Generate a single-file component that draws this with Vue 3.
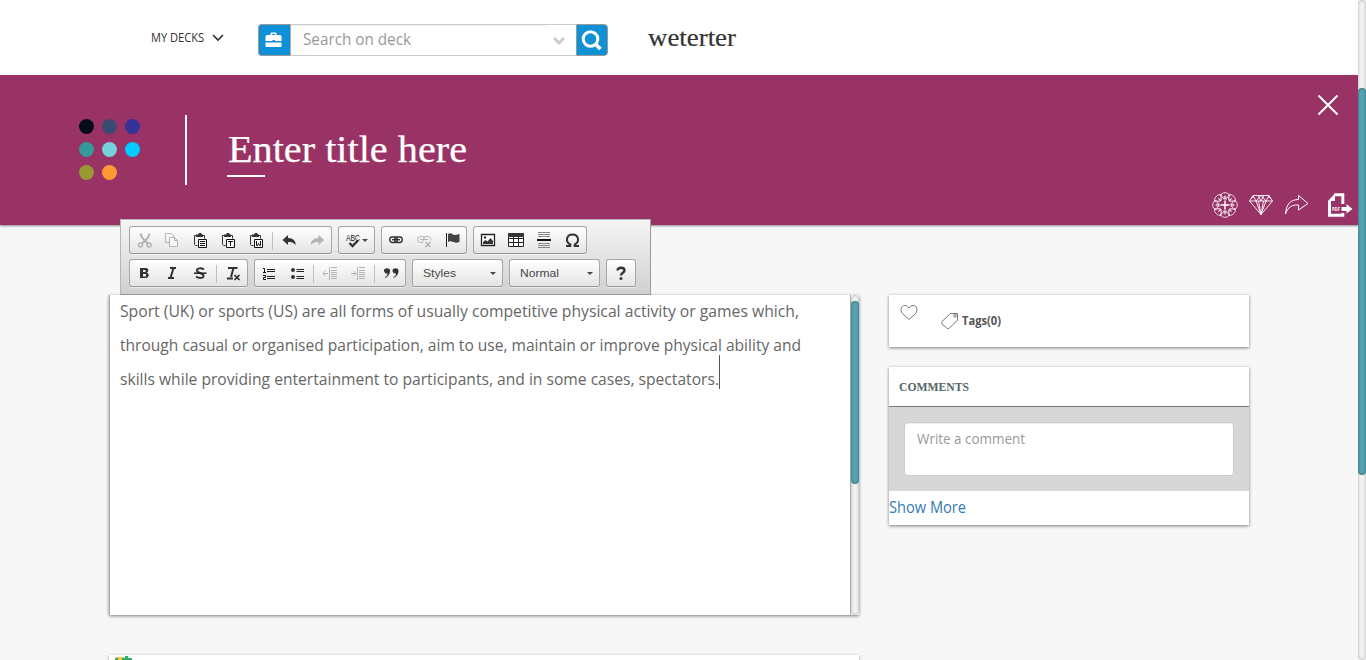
<script setup>
import { h } from 'vue'

// Text run set to a fixed measure, so every line keeps its width.
const Fit = (p) =>
  h('svg', { width: p.w, height: p.size * 1.5, style: { display: 'block', overflow: 'visible' }, 'aria-label': p.text }, [
    h('text', { x: 0, y: p.size * 1.1, 'font-size': p.size, fill: 'currentColor', textLength: p.w, lengthAdjust: 'spacingAndGlyphs' }, p.text),
  ])
Fit.props = ['text', 'w', 'size']

const clip = `<path d="M4.5 3.5h-2v9l1 1h2M11 3.5h1.500v3" fill="none" stroke="#333"/><path d="M4 2.500h2L7 1h2l1 1.500h1V5H4z" fill="#333"/><path d="M6.500 7.500h8v8h-8z" fill="#fff" stroke="#111"/>`
const lines = (x1, x2, ys) => `<path d="${ys.map((y) => `M${x1} ${y}.5H${x2}`).join('')}" fill="none" stroke="currentColor"/>`
const icons = {
  cut: `<path d="M4.500 1.500l1 3 3.500 4.500 3.500-4.500 1-3M9 8.500L5.500 12M9 8.500l3.500 3.500" stroke="currentColor" stroke-width="2" fill="none"/><circle cx="4.500" cy="13" r="2" fill="none" stroke="currentColor" stroke-width="1.500"/><circle cx="13" cy="13" r="2" fill="none" stroke="currentColor" stroke-width="1.500"/>`,
  copy: `<path d="M5 10.500H1.500v-9h6l2 2V5" fill="none" stroke="currentColor"/><path d="M5.500 5.500h5l3 3v6h-8zM10.500 5.500v3h3" fill="#f7f7f7" stroke="currentColor"/>`,
  paste: clip + `<path d="M8 9.500h5M8 11.500h5M8 13.500h5" stroke="#111"/>`,
  pasteText: clip + `<path d="M8 9.500h5M10.500 9v5" stroke="#111"/>`,
  pasteWord: clip + `<path d="M8.500 9v4.500h1l1-2 1 2h1V9" fill="none" stroke="#111"/>`,
  undo: `<path d="M1.500 8L7 3v3c5 0 8 3 7.500 7-2-2.500-4-3-7.500-3v3z" fill="currentColor"/>`,
  redo: `<path d="M15 8L9.500 3v3c-5 0-8 3-7.500 7 2-2.500 4-3 7.500-3v3z" fill="currentColor"/>`,
  link: `<g fill="none" stroke="currentColor" stroke-width="1.300"><rect x="1.700" y="5" width="7.600" height="5.500" rx="2.700"/><rect x="6.700" y="5" width="7.600" height="5.500" rx="2.700"/></g><path d="M4 7.700h8" stroke="#222" stroke-width="1.200"/>`,
  unlink: `<g fill="none" stroke="currentColor"><path d="M7 10.500H4.500a3 3 0 0 1 0-6h2q2 0 2.500 2M7.500 9.500c-1-3 0-5 3.500-5 3 0 4.500 2 3.500 4M4 7.500h8"/><path d="M9.500 10l5 5M14.500 10l-5 5" stroke-width="1.600"/></g>`,
  flag: `<path d="M2.500 1v14" stroke="#222"/><path d="M4 2c3-2 4 1 7 1 2 0 3-1 4.500-1v8c-3 1-4 1-6 0-3-1-4-1-5.500 0z" fill="#444"/>`,
  image: `<path d="M1.500 2.500h13v11h-13z" fill="#fff" stroke="#222" stroke-width="1.300"/><circle cx="5" cy="5.500" r="1.200" fill="#333"/><path d="M3 12V10l2.500-2 2 1.500L10.500 6 13 9v3z" fill="#333"/>`,
  table: `<path d="M.5 2.500h15v12H.5zM.5 6.500h15M.5 10.500h15M5.500 5v9M10.500 5v9" fill="#fff" stroke="#222"/><path d="M0 1h16v4H0z" fill="#333"/>`,
  rule: `<path d="M2 .5h12M2 2.500h12M2 4.500h12M2 11.500h12M2 13.500h12M2 15.500h12" stroke="#888"/><path d="M1 8h14" stroke="#111" stroke-width="2"/>`,
  omega: `<path d="M2 14h4.300v-1.500C1 10 2.300 2.500 8.500 2.500s7.500 7.500 2.200 10V14H15" fill="none" stroke="#333" stroke-width="2"/>`,
  bold: `<path d="M4 3h6c3 0 3 4 .5 4.500C14 8.500 13 13 10 13H4zM7 5v2h2.500V5zM7 9v2.500h3V9z" fill="#333" fill-rule="evenodd"/><path d="M5.800 3v10" stroke="#333" stroke-width="2.400"/>`,
  italic: `<path d="M6 3h6M4 13h6M9.500 3L6.500 13" stroke="#333" stroke-width="2" fill="none"/>`,
  strike: `<path d="M12 4.500C9 2.500 4.500 3 5 6c.500 2 6 2 6.500 4.500.5 3-4.500 3-7.500 1" stroke="#333" stroke-width="2" fill="none"/><path d="M2 8.200h12.500" stroke="#222" stroke-width="1.500"/>`,
  clear: `<path d="M3 3h9.500M8.500 3L6 12M2 13.500h6" stroke="#333" stroke-width="2" fill="none"/><path d="M9.500 10l5 5M14.500 10l-5 5" stroke="#222" stroke-width="1.500"/>`,
  ordered: `<path d="M2 3.500h1.500V8M2 7.500h3M2 10.500h2.500v2H2.500v2H5" stroke="#111" fill="none"/><path d="M6 4.500h8M6 6.500h8M6 11.500h8M6 13.500h8" stroke="#222"/>`,
  bullets: `<circle cx="4" cy="5" r="2" fill="#333"/><circle cx="4" cy="12" r="2" fill="#333"/><path d="M7.500 4.500H15M7.500 6.500H15M7.500 11.500H15M7.500 13.500H15" stroke="#222"/>`,
  outdent: lines(9, 15, [2, 5, 7, 9, 11, 13]) + `<path d="M7.500 2v13M1 8.500h5M3.500 6L1 8.500 3.500 11" stroke="currentColor" fill="none"/>`,
  indent: lines(9, 15, [2, 5, 7, 9, 11, 13]) + `<path d="M7.500 2v13M1 8.500h5M3.500 6L6 8.500 3.500 11" stroke="currentColor" fill="none"/>`,
  quote: `<path d="M1 5.500c0-3 6-3 6 0 0 4-2 6-5 7.500V12c2-1 2.500-2 2.500-3.500C2 9 1 7 1 5.500zM9.500 5.500c0-3 6-3 6 0 0 4-2 6-5 7.500V12c2-1 2.500-2 2.500-3.500-2.500.5-3.500-1.500-3.500-3z" fill="#333"/>`,
  help: `<path d="M4.500 5.500C4.500 1.800 11.500 2 11.500 5.500 11.500 8 8 7.500 8 10.500" fill="none" stroke="#333" stroke-width="2.400"/><circle cx="8" cy="13.600" r="1.500" fill="#333"/>`,
}
const off = new Set(['cut', 'copy', 'redo', 'unlink', 'outdent', 'indent'])
const rows = [
  [
    ['cut', 'copy', 'paste', 'pasteText', 'pasteWord', '|', 'undo', 'redo'],
    ['spell'],
    ['link', 'unlink', 'flag'],
    ['image', 'table', 'rule', 'omega'],
  ],
  [
    ['bold', 'italic', 'strike', '|', 'clear'],
    ['ordered', 'bullets', '|', 'outdent', 'indent', '|', 'quote'],
    ['=Styles'],
    ['=Normal'],
    ['help'],
  ],
]
const dots = ['#050b18', '#3b4a73', '#333399', '#339999', '#77d0da', '#00ccff', '#999933', '#ff9933']
const copy = [
  ['Sport (UK) or sports (US) are all forms of usually competitive physical activity or games which,', 679],
  ['through casual or organised participation, aim to use, maintain or improve physical ability and', 681],
  ['skills while providing entertainment to participants, and in some cases, spectators.', 599],
]
const petals = [0, 45, 90, 135, 180, 225, 270, 315]
</script>

<template>
  <div class="window">
    <div class="page">
      <header class="top">
        <div class="decks">
          <Fit text="MY DECKS" :w="53" :size="12" />
          <svg width="12" height="8" viewBox="0 0 12 8"><path d="M1 1l5 5 5-5" fill="none" stroke="#333" stroke-width="1.700" /></svg>
        </div>
        <div class="search">
          <div class="blue left">
            <svg width="18" height="16" viewBox="0 0 18 16"><path d="M5.500 3V1.500q0-1 1-1h4q1 0 1 1V3H15q1.500 0 1.500 1.500V9H10V8H7.500v1H.5V4.500Q.5 3 2 3zm1.500 0h3V2H7zM.5 10.500h16V14q0 1-1 1h-14q-1 0-1-1z" fill="#fff" fill-rule="evenodd" /></svg>
          </div>
          <div class="field"><Fit text="Search on deck" :w="108" :size="16" /></div>
          <div class="drop"><svg width="14" height="10" viewBox="0 0 14 10"><path d="M2 2l5 5 5-5" fill="none" stroke="#ccc" stroke-width="3" /></svg></div>
          <div class="blue right">
            <svg width="22" height="22" viewBox="0 0 22 22"><circle cx="9.500" cy="10" r="7.300" fill="none" stroke="#fff" stroke-width="3" /><path d="M14.500 15l5 5" stroke="#fff" stroke-width="3.800" /></svg>
          </div>
        </div>
        <div class="name"><Fit text="weterter" :w="88" :size="25.5" /></div>
      </header>

      <section class="banner">
        <div class="dots"><i v-for="c in dots" :key="c" :style="{ background: c }"></i></div>
        <div class="bar"></div>
        <div class="title"><Fit text="Enter title here" :w="239" :size="38.5" /><div class="dash"></div></div>
        <div class="side">
          <svg class="close" width="22" height="22" viewBox="0 0 22 22"><path d="M1.500 1.500l19 19M20.500 1.500l-19 19" stroke="#fff" stroke-width="2" /></svg>
          <div class="actions">
            <svg width="26" height="26" viewBox="0 0 26 26" fill="none" stroke="#fff" stroke-width=".8">
              <g v-for="a in petals" :key="a" :transform="`rotate(${a} 13 13)`"><path d="M8.800 3C9.500 0 16.500 0 17.200 3M9 2.500Q10 7 14.500 7M17 2.500Q16 7 11.500 7M13 3.500v3M11.500 5h3" /></g>
              <path d="M13 8.500v9M8.500 13h9" stroke-width="1.500" />
            </svg>
            <svg width="26" height="22" viewBox="0 0 26 22" fill="none" stroke="#fff"><path d="M5 1.500h16L24.500 7 13 20.500 1.500 7zM1.500 7h23M5 1.500L8 7l5-5.500L18 7l3-5.500M8 7l5 13.500L18 7M10.500 7L13 20.500 15.500 7M3 4.500l3-2M23 4.500l-3-2M10 1.500l3 5.500 3-5.500" stroke-width=".9" /></svg>
            <svg width="26" height="22" viewBox="0 0 26 22"><path d="M1.500 20C2 10 7 5.500 14.500 5.500v-4l9.500 8-9.500 6.500v-5C8 10.500 4 13 1.500 20z" fill="none" stroke="#fff" /></svg>
            <svg width="26" height="26" viewBox="0 0 26 26"><path d="M8.500 2.700h8.300V12M16.800 21v2.300H3.500V9" fill="none" stroke="#fff" stroke-width="3" /><path d="M2 9l7-7.800V9z" fill="#fff" /><path d="M15.500 15h5v-3l6 5-6 4.500V19h-5z" fill="#fff" /><text x="6" y="18.700" font-size="4.500" font-weight="bold" textLength="8" lengthAdjust="spacingAndGlyphs" fill="#fff">PDF</text></svg>
          </div>
        </div>
      </section>

      <div class="toolbar">
        <div v-for="(row, r) in rows" :key="r" class="row">
          <div v-for="(group, g) in row" :key="g" class="group">
            <template v-for="(b, i) in group" :key="i">
              <span v-if="b === '|'" class="sep"></span>
              <span v-else-if="b[0] === '='" class="combo"><Fit :text="b.slice(1)" :w="b === '=Styles' ? 33 : 39" :size="11" /><i class="arrow"></i></span>
              <span v-else-if="b === 'spell'" class="btn spell">
                <svg width="17" height="16" viewBox="0 0 17 16"><text x="1" y="8.500" font-size="9.500" textLength="14" lengthAdjust="spacingAndGlyphs" fill="#111">ABC</text><path d="M4.500 11l3 3L13 8.500" stroke="#333" stroke-width="2.300" fill="none" /></svg><i class="arrow"></i>
              </span>
              <span v-else class="btn" :class="{ off: off.has(b) }"><svg width="16" height="16" viewBox="0 0 16 16" v-html="icons[b]"></svg></span>
            </template>
          </div>
        </div>
      </div>

      <main class="columns">
        <div class="primary">
          <div class="editor">
            <div class="copy">
              <div v-for="(l, i) in copy" :key="i" class="line"><Fit :text="l[0]" :w="l[1]" :size="16" /><i v-if="i === 2" class="caret"></i></div>
            </div>
            <div class="track inner"><div class="thumb"></div></div>
          </div>
          <div class="next">
            <svg width="18" height="10" viewBox="0 0 18 10"><path d="M2 1h8v9H2z" fill="#f5c842" /><path d="M1 2h3v3H1zM8 2h3v3H8z" fill="#3caa68" /><path d="M11 0h3v2h4v3h-4v3h-3V5H8V2h3z" fill="#2bae6e" /></svg>
          </div>
        </div>
        <aside class="secondary">
          <div class="card tags">
            <svg class="heart" width="18" height="16" viewBox="0 0 18 16"><path d="M9 14.500L2.500 8.500C-.5 5 1.500.5 4.500.5 7 .5 8 1.500 9 3 10 1.500 11 .5 13.500.5c3 0 5 4.500 2 8z" fill="none" stroke="#777" /></svg>
            <svg class="tag" width="18" height="18" viewBox="0 0 18 18" fill="none" stroke="#777"><path d="M9.500 1.500h7V8l-8 8c-1 1-2 .5-3 0L1 12c-.5-1-.5-2 0-2.500z" /><circle cx="14" cy="3.800" r="1.300" /></svg>
            <Fit class="strong" text="Tags(0)" :w="39" :size="12" />
          </div>
          <div class="card comments">
            <div class="heading"><Fit text="COMMENTS" :w="70" :size="12.5" /></div>
            <div class="well"><div class="write"><Fit text="Write a comment" :w="108" :size="14" /></div></div>
            <div class="more"><Fit text="Show More" :w="77" :size="16" /></div>
          </div>
        </aside>
      </main>
    </div>
    <div class="track outer"><div class="thumb"></div></div>
  </div>
</template>

<style>
html, body { margin: 0; overflow: hidden; }
</style>

<style scoped>
* { box-sizing: border-box; }
svg { display: block; flex: none; }
.window { display: flex; width: 1366px; height: 660px; overflow: hidden; background: #f7f7f7; font-family: "Trebuchet MS", "Open Sans", "Noto Sans", sans-serif; }
.page { position: relative; width: 1358px; height: 660px; overflow: hidden; }
.top { height: 75px; background: #fff; display: flex; align-items: flex-start; padding-left: 151px; }
.decks { display: flex; gap: 8px; width: 107px; padding-top: 29px; color: #333; }
.decks svg:last-child { margin-top: 5px; }
.search { display: flex; width: 350px; height: 32px; margin-top: 24px; }
.blue { flex: none; width: 32px; height: 32px; background: #1090d5; border: 1px solid #999; display: flex; align-items: center; justify-content: center; }
.left { border-right: 0; border-radius: 4px 0 0 4px; padding-right: 1px; }
.right { border-radius: 0 4px 4px 0; }
.field { width: 256px; border: 1px solid #ccc; border-right: 0; border-left-color: #aaa; padding: 2px 0 0 12px; color: #999; box-shadow: inset 0 1px 1px rgba(0,0,0,.07); }
.drop { width: 30px; border: 1px solid #ccc; border-width: 1px 0; padding: 11px 0 0 6px; }
.name { margin: 18px 0 0 40px; color: #333; font-family: Georgia, "Liberation Serif", serif; stroke: #333; stroke-width: .2px; }
.banner { height: 150px; background: #993366; display: flex; box-shadow: 0 1px 2px rgba(0,0,0,.45); position: relative; }
.dots { display: grid; grid-template-columns: repeat(3, 15px); grid-auto-rows: 15px; gap: 8px; margin: 44px 0 0 79px; width: 106px; }
.dots i { border-radius: 50%; }
.bar { width: 2px; height: 70px; margin-top: 40px; background: #fff; }
.title { margin: 45px 0 0 41px; color: #fff; font-family: Georgia, "Liberation Serif", serif; stroke: #fff; stroke-width: .25px; }
.title svg { height: 55px; }
.dash { width: 38px; height: 2px; margin-left: -1px; background: #fff; }
.side { margin-left: auto; width: 150px; display: flex; flex-direction: column; justify-content: space-between; padding: 19px 5px 7px 4px; }
.close { align-self: flex-end; margin-right: 14px; }
.actions { display: flex; align-items: center; gap: 10px; }
.actions svg:last-child { margin-left: 6px; overflow: visible; }
.toolbar { position: absolute; z-index: 2; left: 120px; top: 219px; width: 531px; height: 76px; padding: 6px 8px; border: 1px solid #999; border-top-color: #b6b6b6; border-left-color: #b6b6b6; background: linear-gradient(#f5f5f5, #cfd1cf); display: flex; flex-direction: column; gap: 5px; }
.row { display: flex; gap: 6px; height: 28px; }
.group { display: flex; height: 28px; border: 1px solid #a6a6a6; border-bottom-color: #979797; border-radius: 3px; background: linear-gradient(#fff, #e4e4e4); box-shadow: 0 1px 0 rgba(255,255,255,.5), 0 0 2px rgba(255,255,255,.15) inset; }
.btn { width: 28px; height: 26px; padding: 5px 6px; color: #333; display: flex; }
.off { color: #b4b4b4; }
.spell { width: 35px; font-family: "Liberation Sans", sans-serif; }
.spell svg { overflow: visible; }
.spell .arrow { margin: 7px 0 0 0; }
.sep { width: 1px; height: 18px; margin: 5px 2px 0; background: #c0c0c0; }
.combo { width: 89px; height: 26px; display: flex; justify-content: space-between; padding: 5px 6px 0 10px; color: #474747; font-family: "Liberation Sans", sans-serif; }
.arrow { border: 3px solid transparent; border-top-color: #474747; border-bottom: 0; height: 3px; margin-top: 7px; }
.columns { display: flex; gap: 30px; padding: 70px 0 0 109px; }
.primary { width: 750px; }
.editor { height: 320px; display: flex; background: #fff; border-left: 1px solid #aaa; box-shadow: 0 1px 3px rgba(0,0,0,.5); }
.copy { width: 741px; border-right: 1px solid #aaa; padding-left: 10px; color: #666; }
.line { height: 34px; padding-top: 4px; display: flex; }
.caret { width: 1px; height: 34px; margin-top: -12px; background: #555; }
.track { width: 8px; background: #f1f1f1; box-shadow: inset 0 0 3px rgba(0,0,0,.3); border-radius: 4px; }
.thumb { background: #56a4b4; border-radius: 4px; box-shadow: inset 0 0 3px rgba(0,0,0,.45); }
.inner { padding-top: 6px; }
.inner .thumb { height: 183px; }
.outer { padding-top: 88px; }
.outer .thumb { height: 387px; }
.next { margin-top: 40px; height: 100px; background: #fff; box-shadow: 0 1px 3px rgba(0,0,0,.4); padding: 1px 0 0 5px; }
.secondary { width: 360px; }
.card { background: #fff; box-shadow: 0 1px 3px rgba(0,0,0,.5); }
.tags { height: 52px; display: flex; padding-left: 11px; color: #555; }
.heart { margin-top: 10px; }
.tag { margin: 17px 3px 0 23px; }
.strong { margin-top: 17px; font-weight: bold; }
.comments { height: 158px; margin-top: 20px; }
.heading { height: 40px; border-bottom: 1px solid #777; padding: 10px 0 0 10px; color: #566; font-family: Georgia, "Liberation Serif", serif; font-weight: bold; }
.well { height: 84px; background: #d7d7d7; padding: 15px; }
.write { height: 54px; border: 1px solid #ccc; border-radius: 4px; background: #fff; padding: 6px 12px; color: #999; box-shadow: inset 0 1px 1px rgba(0,0,0,.07); }
.more { padding-top: 4px; color: #337ab7; }
</style>
